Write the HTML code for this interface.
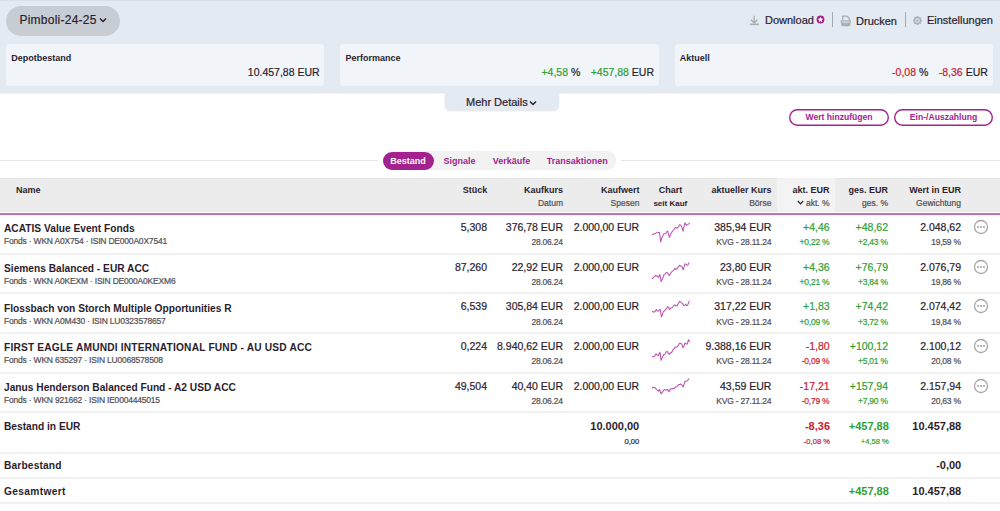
<!DOCTYPE html>
<html><head><meta charset="utf-8"><title>Depot</title>
<style>
html,body{margin:0;padding:0;background:#fff;width:1000px;height:511px;overflow:hidden;}
body{position:relative;font-family:"Liberation Sans", sans-serif;}
.t{position:absolute;white-space:nowrap;line-height:1;}
.r{position:absolute;box-sizing:content-box;}
</style></head><body>
<div class="r" style="left:0px;top:0px;width:1000px;height:93px;background:#e3eaf1;"></div>
<div class="r" style="left:0px;top:93px;width:1000px;height:1px;background:#f1f5f8;"></div>
<div class="r" style="left:0px;top:0px;width:1000px;height:1px;background:#d8dfe7;"></div>
<div class="r" style="left:6px;top:6px;width:114px;height:30px;background:#c8cdd4;border-radius:15px;"></div>
<div class="t" style="top:14.44px;font-size:12px;font-weight:400;color:#2b1d2e;letter-spacing:0.25px;-webkit-text-stroke:0.2px currentColor;left:19.40px;">Pimboli-24-25</div>
<svg class="r" style="left:99px;top:17px" width="8" height="6" viewBox="0 0 8 6"><path d="M1 1.5 L4 4.5 L7 1.5" fill="none" stroke="#2b1d2e" stroke-width="1.5"/></svg>
<svg class="r" style="left:749px;top:15px" width="11" height="11" viewBox="0 0 11 11"><path d="M5.2 0.8 V8 M2 4.8 L5.2 8 L8.4 4.8" fill="none" stroke="#a9acb0" stroke-width="1.3"/><rect x="0.8" y="8.6" width="9" height="1.5" fill="#a9acb0"/></svg>
<div class="t" style="top:15.09px;font-size:11px;font-weight:400;color:#2b1d2e;-webkit-text-stroke:0.2px currentColor;left:765.00px;">Download</div>
<svg class="r" style="left:816.1px;top:14.5px" width="9" height="9" viewBox="0 0 9 9"><circle cx="4.5" cy="4.5" r="3.9" fill="#a3228f"/><path d="M4.50 1.95 L5.32 3.57 L7.12 3.85 L5.83 5.13 L6.12 6.92 L4.50 6.10 L2.88 6.92 L3.17 5.13 L1.88 3.85 L3.68 3.57 Z" fill="#fff"/></svg>
<div class="r" style="left:832px;top:12px;width:1px;height:15px;background:#a6aaaf;"></div>
<svg class="r" style="left:840px;top:14.5px" width="12" height="12" viewBox="0 0 12 12"><path d="M2.7 5.2 V1.15 H6.9 L9.3 3.5 V5.2" fill="none" stroke="#a9acb0" stroke-width="1.3" stroke-linejoin="round"/><path d="M0.6 5.3 H11 L10.4 9.6 Q10.1 11.3 8.6 11.3 H3 Q1.5 11.3 1.2 9.6 Z" fill="#a9acb0"/><rect x="2" y="6.5" width="7.6" height="1" fill="#e3eaf1"/><rect x="3" y="8.7" width="5.6" height="0.5" fill="#bcc0c4"/></svg>
<div class="t" style="top:15.89px;font-size:11px;font-weight:400;color:#2b1d2e;-webkit-text-stroke:0.2px currentColor;right:103.00px;">Drucken</div>
<div class="r" style="left:905px;top:12px;width:1px;height:15px;background:#a6aaaf;"></div>
<svg class="r" style="left:912px;top:15px" width="11" height="11" viewBox="0 0 11 11"><g fill="#aeb1b5"><rect x="4.5" y="1.1" width="2" height="1.6" rx="0.4" transform="rotate(0 5.5 5.5)"/><rect x="4.5" y="1.1" width="2" height="1.6" rx="0.4" transform="rotate(45 5.5 5.5)"/><rect x="4.5" y="1.1" width="2" height="1.6" rx="0.4" transform="rotate(90 5.5 5.5)"/><rect x="4.5" y="1.1" width="2" height="1.6" rx="0.4" transform="rotate(135 5.5 5.5)"/><rect x="4.5" y="1.1" width="2" height="1.6" rx="0.4" transform="rotate(180 5.5 5.5)"/><rect x="4.5" y="1.1" width="2" height="1.6" rx="0.4" transform="rotate(225 5.5 5.5)"/><rect x="4.5" y="1.1" width="2" height="1.6" rx="0.4" transform="rotate(270 5.5 5.5)"/><rect x="4.5" y="1.1" width="2" height="1.6" rx="0.4" transform="rotate(315 5.5 5.5)"/></g><circle cx="5.5" cy="5.5" r="3.0" fill="none" stroke="#aeb1b5" stroke-width="1.5"/><circle cx="5.5" cy="5.5" r="1.2" fill="#aeb1b5"/></svg>
<div class="t" style="top:15.09px;font-size:11px;font-weight:400;color:#2b1d2e;-webkit-text-stroke:0.2px currentColor;right:7.00px;">Einstellungen</div>
<div class="r" style="left:6px;top:44px;width:318px;height:42px;background:#f1f5f9;border-radius:3px;"></div>
<div class="r" style="left:340px;top:44px;width:319px;height:42px;background:#f1f5f9;border-radius:3px;"></div>
<div class="r" style="left:675px;top:44px;width:318px;height:42px;background:#f1f5f9;border-radius:3px;"></div>
<div class="t" style="top:54.18px;font-size:9px;font-weight:700;color:#2b1d2e;left:11.20px;">Depotbestand</div>
<div class="t" style="top:66.61px;font-size:10.5px;font-weight:400;color:#2b1d2e;-webkit-text-stroke:0.2px currentColor;right:680.40px;">10.457,88 EUR</div>
<div class="t" style="top:54.18px;font-size:9px;font-weight:700;color:#2b1d2e;left:345.50px;">Performance</div>
<div class="t" style="top:66.61px;font-size:10.5px;font-weight:400;color:#2b1d2e;-webkit-text-stroke:0.2px currentColor;right:419.70px;"><span style="color:#2fa034">+4,58</span> %</div>
<div class="t" style="top:66.61px;font-size:10.5px;font-weight:400;color:#2b1d2e;-webkit-text-stroke:0.2px currentColor;right:346.00px;"><span style="color:#2fa034">+457,88</span> EUR</div>
<div class="t" style="top:54.18px;font-size:9px;font-weight:700;color:#2b1d2e;left:679.80px;">Aktuell</div>
<div class="t" style="top:66.61px;font-size:10.5px;font-weight:400;color:#2b1d2e;-webkit-text-stroke:0.2px currentColor;right:71.70px;"><span style="color:#c8202c">-0,08</span> %</div>
<div class="t" style="top:66.61px;font-size:10.5px;font-weight:400;color:#2b1d2e;-webkit-text-stroke:0.2px currentColor;right:12.20px;"><span style="color:#c8202c">-8,36</span> EUR</div>
<div class="r" style="left:445px;top:88px;width:114px;height:21.7px;background:#e3eaf1;border-radius:0 0 5px 5px;box-shadow:0 1px 2px rgba(0,0,0,0.12);"></div>
<div class="r" style="left:0px;top:88px;width:1000px;height:5px;background:#e3eaf1;"></div>
<div class="t" style="top:97.49px;font-size:11px;font-weight:400;color:#2b1d2e;-webkit-text-stroke:0.2px currentColor;left:466.00px;">Mehr Details</div>
<svg class="r" style="left:528.7px;top:99.5px" width="8" height="6" viewBox="0 0 8 6"><path d="M1 1.5 L4 4.5 L7 1.5" fill="none" stroke="#2b1d2e" stroke-width="1.5"/></svg>
<svg class="r" style="left:789px;top:108.8px" width="100" height="17" viewBox="0 0 100 17"><rect x="0.7" y="0.7" width="98.6" height="15.6" rx="7.8" fill="none" stroke="#a3228f" stroke-width="1.4"/></svg>
<div class="t" style="top:112.92px;font-size:8.6px;font-weight:700;color:#a3228f;left:689.00px;width:300px;text-align:center;">Wert hinzufügen</div>
<svg class="r" style="left:894px;top:108.8px" width="99" height="17" viewBox="0 0 99 17"><rect x="0.7" y="0.7" width="97.6" height="15.6" rx="7.8" fill="none" stroke="#a3228f" stroke-width="1.4"/></svg>
<div class="t" style="top:112.92px;font-size:8.6px;font-weight:700;color:#a3228f;left:793.50px;width:300px;text-align:center;">Ein-/Auszahlung</div>
<div class="r" style="left:0px;top:160px;width:378px;height:1px;background:#e6e6e6;"></div>
<div class="r" style="left:621px;top:160px;width:379px;height:1px;background:#e6e6e6;"></div>
<div class="r" style="left:382.5px;top:151px;width:233px;height:19px;background:#f2f2f2;border-radius:9.5px;box-shadow:0 0 1px rgba(0,0,0,0.06);"></div>
<div class="r" style="left:382.5px;top:151.5px;width:51.5px;height:18.5px;background:#a3228f;border-radius:9.25px;"></div>
<div class="t" style="top:157.18px;font-size:9px;font-weight:700;color:#fff;left:390.30px;">Bestand</div>
<div class="t" style="top:157.18px;font-size:9px;font-weight:700;color:#a3228f;left:443.60px;">Signale</div>
<div class="t" style="top:157.18px;font-size:9px;font-weight:700;color:#a3228f;left:492.70px;">Verkäufe</div>
<div class="t" style="top:157.18px;font-size:9px;font-weight:700;color:#a3228f;left:546.80px;">Transaktionen</div>
<div class="r" style="left:0px;top:178px;width:1000px;height:34px;background:#ececec;"></div>
<div class="r" style="left:0px;top:178px;width:1000px;height:1px;background:#e6e6e6;"></div>
<div class="r" style="left:776.5px;top:178px;width:58px;height:34px;background:#f3f3f3;"></div>
<div class="r" style="left:0px;top:213px;width:1000px;height:2px;background:#c66fbd;"></div>
<div class="t" style="top:185.88px;font-size:9px;font-weight:700;color:#2b1d2e;left:16.00px;">Name</div>
<div class="t" style="top:185.88px;font-size:9px;font-weight:700;color:#2b1d2e;right:512.70px;">Stück</div>
<div class="t" style="top:185.88px;font-size:9px;font-weight:700;color:#2b1d2e;right:437.00px;">Kaufkurs</div>
<div class="t" style="top:199.30px;font-size:8.5px;font-weight:400;color:#524e55;-webkit-text-stroke:0.2px currentColor;right:437.00px;">Datum</div>
<div class="t" style="top:185.88px;font-size:9px;font-weight:700;color:#2b1d2e;right:360.60px;">Kaufwert</div>
<div class="t" style="top:199.30px;font-size:8.5px;font-weight:400;color:#524e55;-webkit-text-stroke:0.2px currentColor;right:360.60px;">Spesen</div>
<div class="t" style="top:185.88px;font-size:9px;font-weight:700;color:#2b1d2e;left:520.50px;width:300px;text-align:center;">Chart</div>
<div class="t" style="top:199.73px;font-size:8px;font-weight:700;color:#2b1d2e;left:520.30px;width:300px;text-align:center;">seit Kauf</div>
<div class="t" style="top:185.88px;font-size:9px;font-weight:700;color:#2b1d2e;right:228.60px;">aktueller Kurs</div>
<div class="t" style="top:199.30px;font-size:8.5px;font-weight:400;color:#524e55;-webkit-text-stroke:0.2px currentColor;right:228.60px;">Börse</div>
<div class="t" style="top:185.88px;font-size:9px;font-weight:700;color:#2b1d2e;right:170.40px;">akt. EUR</div>
<div class="t" style="top:199.30px;font-size:8.5px;font-weight:400;color:#524e55;-webkit-text-stroke:0.2px currentColor;right:170.40px;">akt. %</div>
<svg class="r" style="left:797px;top:200px" width="7" height="5" viewBox="0 0 7 5"><path d="M0.8 1 L3.5 3.8 L6.2 1" fill="none" stroke="#2b1d2e" stroke-width="1.2"/></svg>
<div class="t" style="top:185.88px;font-size:9px;font-weight:700;color:#2b1d2e;right:112.00px;">ges. EUR</div>
<div class="t" style="top:199.30px;font-size:8.5px;font-weight:400;color:#524e55;-webkit-text-stroke:0.2px currentColor;right:112.00px;">ges. %</div>
<div class="t" style="top:185.88px;font-size:9px;font-weight:700;color:#2b1d2e;right:39.00px;">Wert in EUR</div>
<div class="t" style="top:199.30px;font-size:8.5px;font-weight:400;color:#524e55;-webkit-text-stroke:0.2px currentColor;right:39.00px;">Gewichtung</div>
<div class="r" style="left:0px;top:253px;width:1000px;height:2px;background:#f1f1f1;"></div>
<div class="t" style="top:224.17px;font-size:10.2px;font-weight:700;color:#2b1d2e;left:4.00px;">ACATIS Value Event Fonds</div>
<div class="t" style="top:237.00px;font-size:8.5px;font-weight:400;color:#524e55;letter-spacing:-0.2px;-webkit-text-stroke:0.2px currentColor;left:4.00px;">Fonds · WKN A0X754 · ISIN DE000A0X7541</div>
<div class="t" style="top:221.91px;font-size:10.5px;font-weight:400;color:#2b1d2e;-webkit-text-stroke:0.2px currentColor;right:513.00px;">5,308</div>
<div class="t" style="top:221.91px;font-size:10.5px;font-weight:400;color:#2b1d2e;-webkit-text-stroke:0.2px currentColor;right:437.00px;">376,78 EUR</div>
<div class="t" style="top:238.00px;font-size:8.5px;font-weight:400;color:#524e55;letter-spacing:-0.22px;-webkit-text-stroke:0.2px currentColor;right:437.00px;margin-right:0.22px;">28.06.24</div>
<div class="t" style="top:221.91px;font-size:10.5px;font-weight:400;color:#2b1d2e;letter-spacing:-0.07px;-webkit-text-stroke:0.2px currentColor;right:361.00px;margin-right:0.07px;">2.000,00 EUR</div>
<div class="t" style="top:221.91px;font-size:10.5px;font-weight:400;color:#2b1d2e;-webkit-text-stroke:0.2px currentColor;right:228.60px;">385,94 EUR</div>
<div class="t" style="top:238.00px;font-size:8.5px;font-weight:400;color:#524e55;letter-spacing:-0.22px;-webkit-text-stroke:0.2px currentColor;right:228.60px;margin-right:0.22px;">KVG - 28.11.24</div>
<div class="t" style="top:221.91px;font-size:10.5px;font-weight:400;color:#2fa034;-webkit-text-stroke:0.2px currentColor;right:170.40px;">+4,46</div>
<div class="t" style="top:238.00px;font-size:8.5px;font-weight:400;color:#2fa034;letter-spacing:-0.22px;-webkit-text-stroke:0.2px currentColor;right:170.40px;margin-right:0.22px;">+0,22 %</div>
<div class="t" style="top:221.91px;font-size:10.5px;font-weight:400;color:#2fa034;-webkit-text-stroke:0.2px currentColor;right:112.00px;">+48,62</div>
<div class="t" style="top:238.00px;font-size:8.5px;font-weight:400;color:#2fa034;letter-spacing:-0.22px;-webkit-text-stroke:0.2px currentColor;right:112.00px;margin-right:0.22px;">+2,43 %</div>
<div class="t" style="top:221.91px;font-size:10.5px;font-weight:400;color:#2b1d2e;-webkit-text-stroke:0.2px currentColor;right:39.00px;">2.048,62</div>
<div class="t" style="top:238.00px;font-size:8.5px;font-weight:400;color:#524e55;letter-spacing:-0.22px;-webkit-text-stroke:0.2px currentColor;right:39.00px;margin-right:0.22px;">19,59 %</div>
<svg class="r" style="left:650px;top:214px" width="42" height="40" viewBox="0 0 42 40"><polyline points="2.00,21.00 3.07,20.10 4.13,20.00 5.20,19.40 6.55,18.82 7.90,18.60 9.50,18.20 10.70,28.00 11.80,23.70 12.80,21.90 13.80,19.80 14.80,19.78 15.80,19.40 16.75,17.64 17.70,17.10 19.30,23.30 20.80,19.80 22.40,17.40 24.00,15.50 24.95,13.82 25.90,13.50 27.10,14.30 28.30,13.02 29.50,10.80 30.45,11.06 31.40,12.00 33.10,17.10 34.05,12.58 35.00,8.80 35.95,10.69 36.90,11.20 37.80,10.36 38.70,10.07 39.60,8.80" fill="none" stroke="#bd50b2" stroke-width="1.05" stroke-linejoin="round"/></svg>
<svg class="r" style="left:973px;top:218.75px" width="16" height="16" viewBox="0 0 16 16"><circle cx="8" cy="8" r="6.5" fill="none" stroke="#a6a6a6" stroke-width="1.3"/><circle cx="5" cy="8" r="0.9" fill="#959595"/><circle cx="8" cy="8" r="0.9" fill="#959595"/><circle cx="11" cy="8" r="0.9" fill="#959595"/></svg>
<div class="r" style="left:0px;top:292px;width:1000px;height:2px;background:#f1f1f1;"></div>
<div class="t" style="top:263.92px;font-size:10.2px;font-weight:700;color:#2b1d2e;left:4.00px;">Siemens Balanced - EUR ACC</div>
<div class="t" style="top:276.75px;font-size:8.5px;font-weight:400;color:#524e55;letter-spacing:-0.2px;-webkit-text-stroke:0.2px currentColor;left:4.00px;">Fonds · WKN A0KEXM · ISIN DE000A0KEXM6</div>
<div class="t" style="top:261.66px;font-size:10.5px;font-weight:400;color:#2b1d2e;-webkit-text-stroke:0.2px currentColor;right:513.00px;">87,260</div>
<div class="t" style="top:261.66px;font-size:10.5px;font-weight:400;color:#2b1d2e;-webkit-text-stroke:0.2px currentColor;right:437.00px;">22,92 EUR</div>
<div class="t" style="top:277.75px;font-size:8.5px;font-weight:400;color:#524e55;letter-spacing:-0.22px;-webkit-text-stroke:0.2px currentColor;right:437.00px;margin-right:0.22px;">28.06.24</div>
<div class="t" style="top:261.66px;font-size:10.5px;font-weight:400;color:#2b1d2e;letter-spacing:-0.07px;-webkit-text-stroke:0.2px currentColor;right:361.00px;margin-right:0.07px;">2.000,00 EUR</div>
<div class="t" style="top:261.66px;font-size:10.5px;font-weight:400;color:#2b1d2e;-webkit-text-stroke:0.2px currentColor;right:228.60px;">23,80 EUR</div>
<div class="t" style="top:277.75px;font-size:8.5px;font-weight:400;color:#524e55;letter-spacing:-0.22px;-webkit-text-stroke:0.2px currentColor;right:228.60px;margin-right:0.22px;">KVG - 28.11.24</div>
<div class="t" style="top:261.66px;font-size:10.5px;font-weight:400;color:#2fa034;-webkit-text-stroke:0.2px currentColor;right:170.40px;">+4,36</div>
<div class="t" style="top:277.75px;font-size:8.5px;font-weight:400;color:#2fa034;letter-spacing:-0.22px;-webkit-text-stroke:0.2px currentColor;right:170.40px;margin-right:0.22px;">+0,21 %</div>
<div class="t" style="top:261.66px;font-size:10.5px;font-weight:400;color:#2fa034;-webkit-text-stroke:0.2px currentColor;right:112.00px;">+76,79</div>
<div class="t" style="top:277.75px;font-size:8.5px;font-weight:400;color:#2fa034;letter-spacing:-0.22px;-webkit-text-stroke:0.2px currentColor;right:112.00px;margin-right:0.22px;">+3,84 %</div>
<div class="t" style="top:261.66px;font-size:10.5px;font-weight:400;color:#2b1d2e;-webkit-text-stroke:0.2px currentColor;right:39.00px;">2.076,79</div>
<div class="t" style="top:277.75px;font-size:8.5px;font-weight:400;color:#524e55;letter-spacing:-0.22px;-webkit-text-stroke:0.2px currentColor;right:39.00px;margin-right:0.22px;">19,86 %</div>
<svg class="r" style="left:650px;top:254px" width="42" height="40" viewBox="0 0 42 40"><polyline points="2.00,24.90 2.90,24.12 3.80,23.05 4.70,22.38 5.60,21.40 6.95,21.94 8.30,23.30 9.90,20.60 11.10,27.60 12.13,25.57 13.17,23.12 14.20,20.20 15.23,19.88 16.27,18.66 17.30,18.60 18.30,20.23 19.30,21.80 20.33,19.99 21.37,18.32 22.40,17.10 23.60,16.33 24.80,14.30 25.75,15.40 26.70,15.10 27.63,13.16 28.57,13.00 29.50,11.20 30.65,11.94 31.80,12.40 33.10,15.90 34.05,12.78 35.00,10.00 35.90,10.10 36.80,11.04 37.70,11.20 39.20,8.40" fill="none" stroke="#bd50b2" stroke-width="1.05" stroke-linejoin="round"/></svg>
<svg class="r" style="left:973px;top:258.50px" width="16" height="16" viewBox="0 0 16 16"><circle cx="8" cy="8" r="6.5" fill="none" stroke="#a6a6a6" stroke-width="1.3"/><circle cx="5" cy="8" r="0.9" fill="#959595"/><circle cx="8" cy="8" r="0.9" fill="#959595"/><circle cx="11" cy="8" r="0.9" fill="#959595"/></svg>
<div class="r" style="left:0px;top:332px;width:1000px;height:2px;background:#f1f1f1;"></div>
<div class="t" style="top:303.67px;font-size:10.2px;font-weight:700;color:#2b1d2e;left:4.00px;">Flossbach von Storch Multiple Opportunities R</div>
<div class="t" style="top:316.50px;font-size:8.5px;font-weight:400;color:#524e55;letter-spacing:-0.2px;-webkit-text-stroke:0.2px currentColor;left:4.00px;">Fonds · WKN A0M430 · ISIN LU0323578657</div>
<div class="t" style="top:301.41px;font-size:10.5px;font-weight:400;color:#2b1d2e;-webkit-text-stroke:0.2px currentColor;right:513.00px;">6,539</div>
<div class="t" style="top:301.41px;font-size:10.5px;font-weight:400;color:#2b1d2e;-webkit-text-stroke:0.2px currentColor;right:437.00px;">305,84 EUR</div>
<div class="t" style="top:317.50px;font-size:8.5px;font-weight:400;color:#524e55;letter-spacing:-0.22px;-webkit-text-stroke:0.2px currentColor;right:437.00px;margin-right:0.22px;">28.06.24</div>
<div class="t" style="top:301.41px;font-size:10.5px;font-weight:400;color:#2b1d2e;letter-spacing:-0.07px;-webkit-text-stroke:0.2px currentColor;right:361.00px;margin-right:0.07px;">2.000,00 EUR</div>
<div class="t" style="top:301.41px;font-size:10.5px;font-weight:400;color:#2b1d2e;-webkit-text-stroke:0.2px currentColor;right:228.60px;">317,22 EUR</div>
<div class="t" style="top:317.50px;font-size:8.5px;font-weight:400;color:#524e55;letter-spacing:-0.22px;-webkit-text-stroke:0.2px currentColor;right:228.60px;margin-right:0.22px;">KVG - 29.11.24</div>
<div class="t" style="top:301.41px;font-size:10.5px;font-weight:400;color:#2fa034;-webkit-text-stroke:0.2px currentColor;right:170.40px;">+1,83</div>
<div class="t" style="top:317.50px;font-size:8.5px;font-weight:400;color:#2fa034;letter-spacing:-0.22px;-webkit-text-stroke:0.2px currentColor;right:170.40px;margin-right:0.22px;">+0,09 %</div>
<div class="t" style="top:301.41px;font-size:10.5px;font-weight:400;color:#2fa034;-webkit-text-stroke:0.2px currentColor;right:112.00px;">+74,42</div>
<div class="t" style="top:317.50px;font-size:8.5px;font-weight:400;color:#2fa034;letter-spacing:-0.22px;-webkit-text-stroke:0.2px currentColor;right:112.00px;margin-right:0.22px;">+3,72 %</div>
<div class="t" style="top:301.41px;font-size:10.5px;font-weight:400;color:#2b1d2e;-webkit-text-stroke:0.2px currentColor;right:39.00px;">2.074,42</div>
<div class="t" style="top:317.50px;font-size:8.5px;font-weight:400;color:#524e55;letter-spacing:-0.22px;-webkit-text-stroke:0.2px currentColor;right:39.00px;margin-right:0.22px;">19,84 %</div>
<svg class="r" style="left:650px;top:294px" width="42" height="40" viewBox="0 0 42 40"><polyline points="2.00,17.10 3.00,17.68 4.00,18.20 5.20,17.28 6.40,15.50 7.35,16.94 8.30,17.10 9.30,16.01 10.30,15.50 11.40,22.90 12.40,20.52 13.40,17.40 14.40,16.94 15.40,15.90 16.55,14.53 17.70,12.70 18.70,13.55 19.70,15.50 21.05,13.84 22.40,13.50 23.60,11.99 24.80,10.80 25.95,11.74 27.10,12.00 28.45,9.30 29.80,7.30 30.80,8.05 31.80,8.80 32.80,9.94 33.80,11.60 34.75,11.48 35.70,10.40 36.70,11.42 37.70,11.20 39.20,6.90" fill="none" stroke="#bd50b2" stroke-width="1.05" stroke-linejoin="round"/></svg>
<svg class="r" style="left:973px;top:298.25px" width="16" height="16" viewBox="0 0 16 16"><circle cx="8" cy="8" r="6.5" fill="none" stroke="#a6a6a6" stroke-width="1.3"/><circle cx="5" cy="8" r="0.9" fill="#959595"/><circle cx="8" cy="8" r="0.9" fill="#959595"/><circle cx="11" cy="8" r="0.9" fill="#959595"/></svg>
<div class="r" style="left:0px;top:372px;width:1000px;height:2px;background:#f1f1f1;"></div>
<div class="t" style="top:343.42px;font-size:10.2px;font-weight:700;color:#2b1d2e;letter-spacing:0.18px;left:4.00px;">FIRST EAGLE AMUNDI INTERNATIONAL FUND - AU USD ACC</div>
<div class="t" style="top:356.25px;font-size:8.5px;font-weight:400;color:#524e55;letter-spacing:-0.2px;-webkit-text-stroke:0.2px currentColor;left:4.00px;">Fonds · WKN 635297 · ISIN LU0068578508</div>
<div class="t" style="top:341.16px;font-size:10.5px;font-weight:400;color:#2b1d2e;-webkit-text-stroke:0.2px currentColor;right:513.00px;">0,224</div>
<div class="t" style="top:341.16px;font-size:10.5px;font-weight:400;color:#2b1d2e;-webkit-text-stroke:0.2px currentColor;right:437.00px;">8.940,62 EUR</div>
<div class="t" style="top:357.25px;font-size:8.5px;font-weight:400;color:#524e55;letter-spacing:-0.22px;-webkit-text-stroke:0.2px currentColor;right:437.00px;margin-right:0.22px;">28.06.24</div>
<div class="t" style="top:341.16px;font-size:10.5px;font-weight:400;color:#2b1d2e;letter-spacing:-0.07px;-webkit-text-stroke:0.2px currentColor;right:361.00px;margin-right:0.07px;">2.000,00 EUR</div>
<div class="t" style="top:341.16px;font-size:10.5px;font-weight:400;color:#2b1d2e;-webkit-text-stroke:0.2px currentColor;right:228.60px;">9.388,16 EUR</div>
<div class="t" style="top:357.25px;font-size:8.5px;font-weight:400;color:#524e55;letter-spacing:-0.22px;-webkit-text-stroke:0.2px currentColor;right:228.60px;margin-right:0.22px;">KVG - 28.11.24</div>
<div class="t" style="top:341.16px;font-size:10.5px;font-weight:400;color:#c8202c;-webkit-text-stroke:0.2px currentColor;right:170.40px;">-1,80</div>
<div class="t" style="top:357.25px;font-size:8.5px;font-weight:400;color:#c8202c;letter-spacing:-0.22px;-webkit-text-stroke:0.2px currentColor;right:170.40px;margin-right:0.22px;">-0,09 %</div>
<div class="t" style="top:341.16px;font-size:10.5px;font-weight:400;color:#2fa034;-webkit-text-stroke:0.2px currentColor;right:112.00px;">+100,12</div>
<div class="t" style="top:357.25px;font-size:8.5px;font-weight:400;color:#2fa034;letter-spacing:-0.22px;-webkit-text-stroke:0.2px currentColor;right:112.00px;margin-right:0.22px;">+5,01 %</div>
<div class="t" style="top:341.16px;font-size:10.5px;font-weight:400;color:#2b1d2e;-webkit-text-stroke:0.2px currentColor;right:39.00px;">2.100,12</div>
<div class="t" style="top:357.25px;font-size:8.5px;font-weight:400;color:#524e55;letter-spacing:-0.22px;-webkit-text-stroke:0.2px currentColor;right:39.00px;margin-right:0.22px;">20,08 %</div>
<svg class="r" style="left:650px;top:334px" width="42" height="40" viewBox="0 0 42 40"><polyline points="2.00,22.50 3.20,22.80 4.40,22.50 6.00,19.80 7.15,21.08 8.30,21.40 9.90,18.20 11.10,26.40 12.45,23.06 13.80,20.60 14.97,20.23 16.13,18.04 17.30,17.40 18.30,19.24 19.30,20.60 20.33,18.86 21.37,18.63 22.40,17.10 23.30,15.28 24.20,14.72 25.10,13.10 26.10,13.21 27.10,12.70 28.30,11.32 29.50,9.20 30.65,9.52 31.80,10.00 33.10,13.90 34.05,11.86 35.00,8.80 36.15,10.08 37.30,10.00 38.50,5.70 39.60,8.00" fill="none" stroke="#bd50b2" stroke-width="1.05" stroke-linejoin="round"/></svg>
<svg class="r" style="left:973px;top:338.00px" width="16" height="16" viewBox="0 0 16 16"><circle cx="8" cy="8" r="6.5" fill="none" stroke="#a6a6a6" stroke-width="1.3"/><circle cx="5" cy="8" r="0.9" fill="#959595"/><circle cx="8" cy="8" r="0.9" fill="#959595"/><circle cx="11" cy="8" r="0.9" fill="#959595"/></svg>
<div class="t" style="top:383.17px;font-size:10.2px;font-weight:700;color:#2b1d2e;left:4.00px;">Janus Henderson Balanced Fund - A2 USD ACC</div>
<div class="t" style="top:396.00px;font-size:8.5px;font-weight:400;color:#524e55;letter-spacing:-0.2px;-webkit-text-stroke:0.2px currentColor;left:4.00px;">Fonds · WKN 921662 · ISIN IE0004445015</div>
<div class="t" style="top:380.91px;font-size:10.5px;font-weight:400;color:#2b1d2e;-webkit-text-stroke:0.2px currentColor;right:513.00px;">49,504</div>
<div class="t" style="top:380.91px;font-size:10.5px;font-weight:400;color:#2b1d2e;-webkit-text-stroke:0.2px currentColor;right:437.00px;">40,40 EUR</div>
<div class="t" style="top:397.00px;font-size:8.5px;font-weight:400;color:#524e55;letter-spacing:-0.22px;-webkit-text-stroke:0.2px currentColor;right:437.00px;margin-right:0.22px;">28.06.24</div>
<div class="t" style="top:380.91px;font-size:10.5px;font-weight:400;color:#2b1d2e;letter-spacing:-0.07px;-webkit-text-stroke:0.2px currentColor;right:361.00px;margin-right:0.07px;">2.000,00 EUR</div>
<div class="t" style="top:380.91px;font-size:10.5px;font-weight:400;color:#2b1d2e;-webkit-text-stroke:0.2px currentColor;right:228.60px;">43,59 EUR</div>
<div class="t" style="top:397.00px;font-size:8.5px;font-weight:400;color:#524e55;letter-spacing:-0.22px;-webkit-text-stroke:0.2px currentColor;right:228.60px;margin-right:0.22px;">KVG - 27.11.24</div>
<div class="t" style="top:380.91px;font-size:10.5px;font-weight:400;color:#c8202c;-webkit-text-stroke:0.2px currentColor;right:170.40px;">-17,21</div>
<div class="t" style="top:397.00px;font-size:8.5px;font-weight:400;color:#c8202c;letter-spacing:-0.22px;-webkit-text-stroke:0.2px currentColor;right:170.40px;margin-right:0.22px;">-0,79 %</div>
<div class="t" style="top:380.91px;font-size:10.5px;font-weight:400;color:#2fa034;-webkit-text-stroke:0.2px currentColor;right:112.00px;">+157,94</div>
<div class="t" style="top:397.00px;font-size:8.5px;font-weight:400;color:#2fa034;letter-spacing:-0.22px;-webkit-text-stroke:0.2px currentColor;right:112.00px;margin-right:0.22px;">+7,90 %</div>
<div class="t" style="top:380.91px;font-size:10.5px;font-weight:400;color:#2b1d2e;-webkit-text-stroke:0.2px currentColor;right:39.00px;">2.157,94</div>
<div class="t" style="top:397.00px;font-size:8.5px;font-weight:400;color:#524e55;letter-spacing:-0.22px;-webkit-text-stroke:0.2px currentColor;right:39.00px;margin-right:0.22px;">20,63 %</div>
<svg class="r" style="left:650px;top:374px" width="42" height="40" viewBox="0 0 42 40"><polyline points="2.00,14.30 3.00,13.22 4.00,13.50 4.90,13.62 5.80,14.68 6.70,15.50 8.30,17.10 9.50,15.50 11.10,19.80 12.45,18.11 13.80,15.90 14.95,15.59 16.10,16.30 17.70,15.50 18.90,17.80 20.10,15.50 21.13,14.69 22.17,14.59 23.20,14.70 24.23,14.53 25.27,13.14 26.30,13.10 27.30,12.29 28.30,10.80 29.45,10.63 30.60,10.00 31.85,11.04 33.10,13.10 34.05,10.25 35.00,7.30 35.95,7.23 36.90,7.30 38.05,5.78 39.20,4.50" fill="none" stroke="#bd50b2" stroke-width="1.05" stroke-linejoin="round"/></svg>
<svg class="r" style="left:973px;top:377.75px" width="16" height="16" viewBox="0 0 16 16"><circle cx="8" cy="8" r="6.5" fill="none" stroke="#a6a6a6" stroke-width="1.3"/><circle cx="5" cy="8" r="0.9" fill="#959595"/><circle cx="8" cy="8" r="0.9" fill="#959595"/><circle cx="11" cy="8" r="0.9" fill="#959595"/></svg>
<div class="r" style="left:0px;top:411px;width:1000px;height:2px;background:#f1f1f1;"></div>
<div class="t" style="top:421.67px;font-size:10.2px;font-weight:700;color:#2b1d2e;left:4.00px;">Bestand in EUR</div>
<div class="t" style="top:420.99px;font-size:11px;font-weight:700;color:#2b1d2e;right:360.80px;">10.000,00</div>
<div class="t" style="top:437.87px;font-size:7.6px;font-weight:400;color:#2b1d2e;-webkit-text-stroke:0.2px currentColor;right:360.80px;">0,00</div>
<div class="t" style="top:420.99px;font-size:11px;font-weight:700;color:#c8202c;right:170.00px;">-8,36</div>
<div class="t" style="top:437.87px;font-size:7.6px;font-weight:400;color:#c8202c;-webkit-text-stroke:0.2px currentColor;right:170.00px;">-0,08 %</div>
<div class="t" style="top:420.99px;font-size:11px;font-weight:700;color:#2fa034;right:111.20px;">+457,88</div>
<div class="t" style="top:437.87px;font-size:7.6px;font-weight:400;color:#2fa034;-webkit-text-stroke:0.2px currentColor;right:111.20px;">+4,58 %</div>
<div class="t" style="top:420.99px;font-size:11px;font-weight:700;color:#2b1d2e;right:38.80px;">10.457,88</div>
<div class="r" style="left:0px;top:452px;width:1000px;height:2px;background:#f1f1f1;"></div>
<div class="t" style="top:461.17px;font-size:10.2px;font-weight:700;color:#2b1d2e;letter-spacing:0.15px;left:4.00px;">Barbestand</div>
<div class="t" style="top:460.49px;font-size:11px;font-weight:700;color:#2b1d2e;right:38.80px;">-0,00</div>
<div class="r" style="left:0px;top:477px;width:1000px;height:2px;background:#f1f1f1;"></div>
<div class="t" style="top:487.17px;font-size:10.2px;font-weight:700;color:#2b1d2e;letter-spacing:0.35px;left:4.00px;">Gesamtwert</div>
<div class="t" style="top:485.99px;font-size:11px;font-weight:700;color:#2fa034;right:111.20px;">+457,88</div>
<div class="t" style="top:485.99px;font-size:11px;font-weight:700;color:#2b1d2e;right:38.80px;">10.457,88</div>
<div class="r" style="left:0px;top:501.5px;width:1000px;height:2px;background:#f1f1f1;"></div>
</body></html>
